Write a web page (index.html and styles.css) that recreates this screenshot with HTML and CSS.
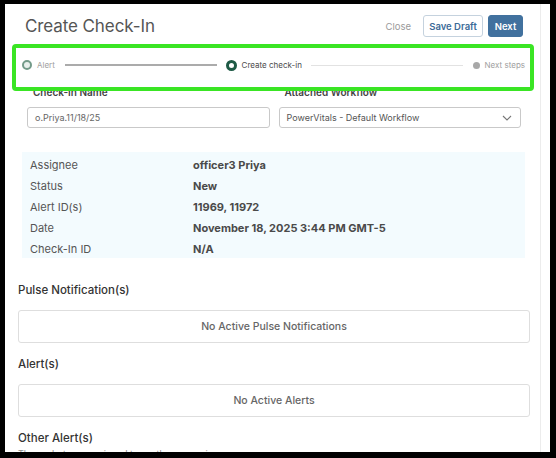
FILE: index.html
```html
<!DOCTYPE html>
<html>
<head>
<meta charset="utf-8">
<link rel="stylesheet" href="styles.css">
</head>
<body>
<div class="frame">
  <div class="modal">
    <div class="header">
      <div class="title">Create Check-In</div>
      <div class="actions">
        <span class="close">Close</span>
        <button class="btn btn-outline">Save Draft</button>
        <button class="btn btn-primary">Next</button>
      </div>
    </div>

    <div class="stepper">
      <span class="step-dot done"></span>
      <span class="step-label muted">Alert</span>
      <span class="step-line thick"></span>
      <span class="step-dot current"></span>
      <span class="step-label">Create check-in</span>
      <span class="step-line thin"></span>
      <span class="step-dot todo"></span>
      <span class="step-label muted">Next steps</span>
    </div>

    <div class="fields">
      <div class="field">
        <div class="field-label">Check-In Name</div>
        <div class="input">o.Priya.11/18/25</div>
      </div>
      <div class="field">
        <div class="field-label">Attached Workflow</div>
        <div class="input select">
          <span>PowerVitals - Default Workflow</span>
          <svg class="chev" width="10" height="6" viewBox="0 0 10 6"><path d="M1 1 L5 5 L9 1" fill="none" stroke="#777" stroke-width="1.1"/></svg>
        </div>
      </div>
    </div>

    <div class="info">
      <div class="row"><span class="k">Assignee</span><span class="v">officer3 Priya</span></div>
      <div class="row"><span class="k">Status</span><span class="v">New</span></div>
      <div class="row"><span class="k">Alert ID(s)</span><span class="v">11969, 11972</span></div>
      <div class="row"><span class="k">Date</span><span class="v">November 18, 2025 3:44 PM GMT-5</span></div>
      <div class="row"><span class="k">Check-In ID</span><span class="v">N/A</span></div>
    </div>

    <div class="section">
      <div class="sec-title">Pulse Notification(s)</div>
      <div class="empty">No Active Pulse Notifications</div>
      <div class="sec-title">Alert(s)</div>
      <div class="empty">No Active Alerts</div>
      <div class="sec-title last">Other Alert(s)</div>
      <div class="sec-sub">These alerts are assigned to another supervisor</div>
    </div>
  </div>
  <div class="highlight"></div>
</div>
</body>
</html>
```

FILE: styles.css
```css
html, body {
  margin: 0;
  padding: 0;
  background: #000;
  font-family: Inter, "Liberation Sans", sans-serif;
}
.frame {
  position: relative;
  margin: 4px 0 0 5px;
  width: 545px;
  height: 448px;
  background: #fff;
  overflow: hidden;
  display: flex;
}
.modal {
  width: 535px;
  border-right: 1px solid #ececec;
  flex: none;
}
.header {
  display: flex;
  align-items: center;
  justify-content: space-between;
  height: 22px;
  margin-top: 11px;
  padding: 0 17px 0 20px;
}
.title {
  font-size: 17px;
  color: #555;
  letter-spacing: -0.1px;
}
.actions {
  display: flex;
  align-items: center;
}
.close {
  font-size: 9.5px;
  color: #9a9a9a;
  margin-right: 12px;
}
.btn {
  font-family: Inter, "Liberation Sans", sans-serif;
  font-size: 9.5px;
  font-weight: 600;
  height: 22px;
  border-radius: 3px;
  padding: 0 5px;
  box-sizing: border-box;
}
.btn-outline {
  background: #fff;
  border: 1px solid #c5d2de;
  color: #3d6b98;
  width: 60px;
}
.btn-primary {
  margin-left: 5px;
  background: #41719e;
  border: 1px solid #41719e;
  color: #fff;
  width: 35px;
  padding: 0;
}
.stepper {
  display: flex;
  align-items: center;
  height: 14px;
  margin-top: 21px;
  padding: 0 15px 0 17px;
}
.step-dot {
  flex: none;
  border-radius: 50%;
  box-sizing: border-box;
}
.step-dot.done {
  width: 10px;
  height: 10px;
  border: 2.5px solid #739a89;
  background: #e8efec;
}
.step-dot.current {
  width: 11px;
  height: 11px;
  border: 3px solid #1e5a45;
  background: #fff;
}
.step-dot.todo {
  width: 7px;
  height: 7px;
  background: #a8a8a8;
}
.step-label {
  font-size: 8px;
  color: #4a4a4a;
  margin-left: 5px;
}
.step-label.muted {
  color: #a0a0a0;
}
.step-line {
  flex: 1;
}
.step-line.thick {
  height: 2px;
  background: #ababab;
  margin: 0 9px 0 10px;
}
.step-line.thin {
  height: 1px;
  background: #e2e2e2;
  margin: 0 10px 0 9px;
}
.fields {
  display: flex;
  gap: 9px;
  margin-top: 14px;
  padding: 0 19px 0 22px;
}
.field {
  flex: 1;
}
.field-label {
  font-size: 10px;
  font-weight: 600;
  line-height: 12px;
  color: #444;
  padding-left: 6px;
  margin-bottom: 9px;
}
.input {
  height: 21px;
  box-sizing: border-box;
  border: 1px solid #c9c9c9;
  border-radius: 3px;
  font-size: 9px;
  color: #666;
  padding: 0 7px;
  display: flex;
  align-items: center;
}
.select {
  justify-content: space-between;
  color: #555;
}
.chev {
  margin-right: 1px;
}
.info {
  margin: 24px 15px 0 17px;
  height: 106px;
  box-sizing: border-box;
  padding: 2px 0 0 8px;
  background: #f3fbfe;
}
.row {
  display: flex;
  height: 21px;
  align-items: center;
  font-size: 11px;
}
.k {
  width: 163px;
  color: #555;
}
.v {
  font-weight: 700;
  color: #4a4a4a;
}
.section {
  padding: 0 10px 0 13px;
  margin-top: 24px;
}
.sec-title {
  font-size: 11.5px;
  font-weight: 500;
  line-height: 16px;
  color: #333;
  margin-bottom: 12px;
}
.sec-title.last {
  margin-bottom: 2px;
}
.empty {
  height: 33px;
  box-sizing: border-box;
  border: 1px solid #dedede;
  border-radius: 3px;
  display: flex;
  align-items: center;
  justify-content: center;
  font-size: 10.5px;
  font-weight: 500;
  color: #666;
  margin-bottom: 13px;
}
.sec-sub {
  font-size: 9px;
  line-height: 12px;
  color: #888;
}
.highlight {
  position: absolute;
  left: 7px;
  top: 40px;
  width: 522px;
  height: 47px;
  box-sizing: border-box;
  border: 4px solid #3ae524;
  border-radius: 4px;
}
```
